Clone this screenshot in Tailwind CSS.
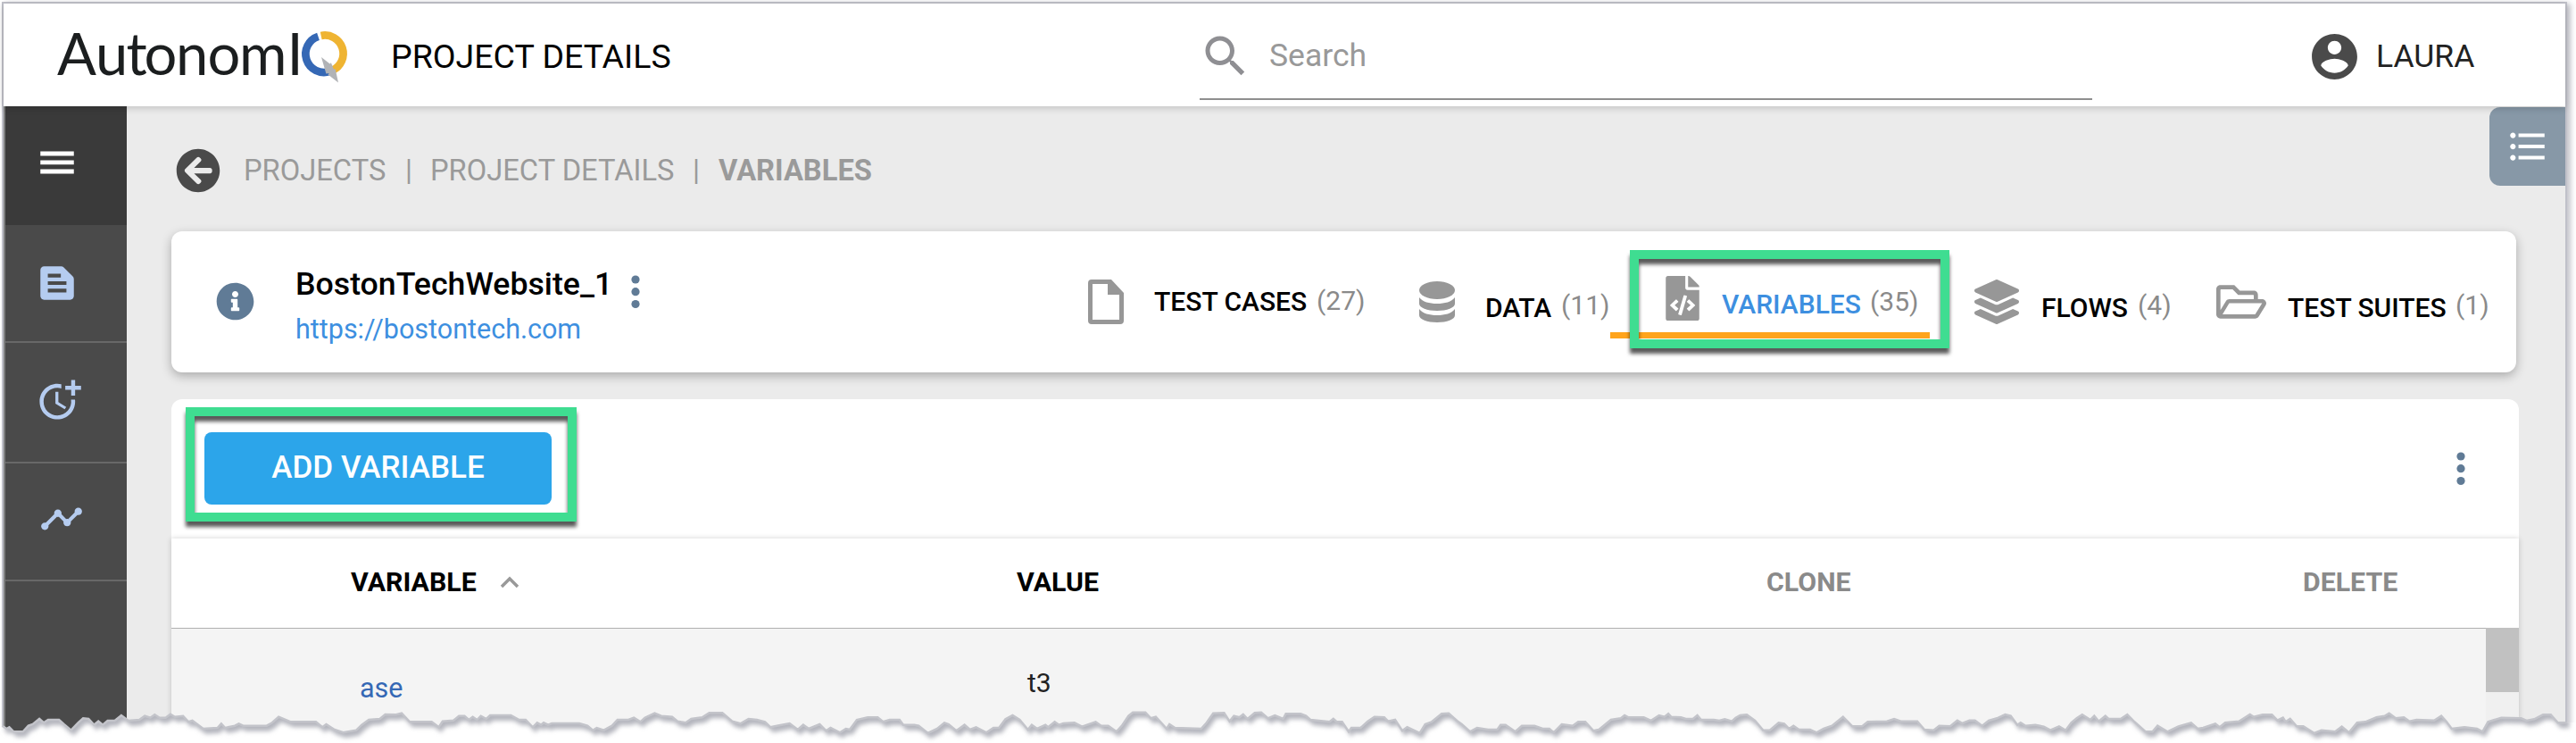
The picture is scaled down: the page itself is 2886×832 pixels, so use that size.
<!DOCTYPE html>
<html lang="en">
<head>
<meta charset="utf-8">
<title>AutonomIQ - Project Details</title>
<script src="https://cdn.jsdelivr.net/npm/@tailwindcss/browser@4"></script>
</head>
<body class="relative h-[832px] w-[2886px] overflow-hidden bg-white font-['Roboto',sans-serif] whitespace-nowrap">
<div class="mt-[2px] ml-[2px] flex h-[840px] w-[2874px] flex-col border-2 border-b-0 border-[#c0c1c9] bg-[#ebebeb] shadow-[4px_2px_6px_rgba(90,90,110,0.35)]">

  <!-- Top bar -->
  <header class="relative z-10 flex h-[115px] shrink-0 items-start bg-white shadow-[0_2px_8px_rgba(0,0,0,0.18)]">
    <svg class="ml-[54px] h-[115px] w-[340px] shrink-0" viewBox="58 4 340 115">
      <text x="64 107 141.500 161.500 197 232.500 268 321.500" y="84" font-family="Lato" font-size="65" fill="#1b1e1f">AutonomI</text>
      <path d="M356.500 40.800A20.600 20.600 0 1 0 369.500 79.900" fill="none" stroke="#3568b5" stroke-width="8.700"/>
      <path d="M359.700 39.900A20.600 20.600 0 0 1 372.500 78.800" fill="none" stroke="#efb432" stroke-width="8.700"/>
      <path d="M360 64l9.600 7.600 1.300-1.400 3 7.300 1.800-.3L379 92.500l-11.500-9 1.300-1.500-3.400.4z" fill="#b1b3b6"/>
    </svg>
    <h1 class="ml-[40px] mt-[38px] w-[906px] text-[37.500px] leading-[42px] text-black">PROJECT DETAILS</h1>
    <div class="flex h-[108px] w-[1000px] items-start border-b-2 border-[#8f8f8f]">
      <svg class="mt-[29px] -ml-px size-[60px] fill-[#8f8f93]" viewBox="0 0 24 24"><path d="M15.500 14h-.79l-.28-.27C15.410 12.590 16 11.110 16 9.500 16 5.910 13.090 3 9.500 3S3 5.910 3 9.500 5.910 16 9.500 16c1.610 0 3.090-.59 4.230-1.570l.27.28v.79l5 4.990L20.490 19l-4.990-5zm-6 0C7.010 14 5 11.990 5 9.500S7.010 5 9.500 5 14 7.010 14 9.500 11.990 14 9.500 14z"/></svg>
      <span class="ml-[19px] mt-[37px] text-[35.500px] leading-[42px] text-[#999]">Search</span>
    </div>
    <svg class="mt-[29px] ml-[241px] size-[61px] fill-[#4a4a4a]" viewBox="0 0 24 24"><path d="M12 2C6.480 2 2 6.480 2 12s4.480 10 10 10 10-4.480 10-10S17.520 2 12 2zm0 3c1.660 0 3 1.340 3 3s-1.340 3-3 3-3-1.340-3-3 1.340-3 3-3zm0 14.200c-2.500 0-4.710-1.280-6-3.220.03-1.990 4-3.080 6-3.080 1.990 0 5.970 1.090 6 3.080-1.290 1.940-3.500 3.220-6 3.220z"/></svg>
    <span class="ml-[16px] mt-[38px] text-[35.500px] leading-[42px] text-[#222]">LAURA</span>
  </header>

  <div class="flex min-h-0 grow">
    <!-- Side navigation -->
    <nav class="flex w-[138px] shrink-0 flex-col border-l-2 border-[#7d7e7e] bg-[#4a4a4a] fill-[#b5ccf0]">
      <div class="h-[133px] bg-[#3a3a3a] pt-[38px] pl-[33px]">
        <svg class="size-[50px] fill-white" viewBox="0 0 24 24"><path d="M3 18h18v-2.400H3V18zm0-4.900h18v-2.300H3v2.300zM3 6v2.400h18V6H3z"/></svg>
      </div>
      <div class="h-[132px] border-b-2 border-[#686868] pt-[40px] pl-[33px]">
        <svg class="size-[50px]" viewBox="0 0 24 24"><path d="M20.410 8.410l-4.830-4.830C15.210 3.210 14.700 3 14.170 3H5C3.900 3 3 3.900 3 5v14c0 1.100.9 2 2 2h14c1.100 0 2-.9 2-2V9.830C21 9.300 20.790 8.790 20.410 8.410zM7 7h7v2H7V7zM17 17H7v-2h10V17zM17 13H7v-2h10V13z"/></svg>
      </div>
      <div class="h-[135px] border-b-2 border-[#686868] pt-[37px] pl-[34px]">
        <svg class="size-[53px]" viewBox="0 0 24 24"><path d="M10 8v6l4.700 2.900.8-1.200-4-2.400V8zM17.920 12A6.957 6.957 0 0 1 11 20c-3.900 0-7-3.100-7-7s3.100-7 7-7c.7 0 1.370.1 2 .29V4.230c-.64-.15-1.310-.23-2-.23-5 0-9 4-9 9s4 9 9 9 9-4 9-9c0-.34-.02-.67-.06-1h-2.020zM20 5V2h-2v3h-3v2h3v3h2V7h3V5z"/></svg>
      </div>
      <div class="h-[132px] border-b-2 border-[#686868] pt-[37px] pl-[38px]">
        <svg class="size-[50px]" viewBox="0 0 24 24"><path d="M23 8c0 1.100-.9 2-2 2-.18 0-.35-.02-.51-.07l-3.560 3.550c.05.16.07.34.07.52 0 1.100-.9 2-2 2s-2-.9-2-2c0-.18.02-.36.07-.52l-2.550-2.550c-.16.05-.34.07-.52.07s-.36-.02-.52-.07l-4.550 4.560c.05.16.07.33.07.51 0 1.100-.9 2-2 2s-2-.9-2-2 .9-2 2-2c.18 0 .35.02.51.07l4.560-4.550C8.020 9.360 8 9.180 8 9c0-1.100.9-2 2-2s2 .9 2 2c0 .18-.02.36-.07.52l2.550 2.550c.16-.05.34-.07.52-.07s.36.02.52.07l3.550-3.560C19.020 8.350 19 8.180 19 8c0-1.100.9-2 2-2s2 .9 2 2z"/></svg>
      </div>
    </nav>

    <main class="flex w-[2732px] flex-col pl-[50px]">
      <!-- Breadcrumb and list toggle -->
      <div class="flex h-[140px] items-start">
        <svg class="mt-[47px] ml-[5px] size-[50px] fill-[#4a4a4a]" viewBox="0 0 512 512"><path d="M256 504C119 504 8 393 8 256S119 8 256 8s248 111 248 248-111 248-248 248zm28.900-143.600L209.400 288H392c13.300 0 24-10.700 24-24v-16c0-13.300-10.700-24-24-24H209.400l75.500-72.400c9.700-9.300 9.900-24.800.4-34.300l-11-10.900c-9.400-9.400-24.600-9.400-33.900 0L107.700 239c-9.400 9.400-9.400 24.600 0 33.900l132.700 132.700c9.400 9.400 24.600 9.400 33.900 0l11-10.900c9.500-9.500 9.300-25-.4-34.300z"/></svg>
        <div class="mt-[52px] ml-[26px] flex text-[32.700px] leading-[40px] text-[#9a9a9a]">
          <span class="w-[181px]">PROJECTS</span><span class="w-[28px]">|</span>
          <span class="w-[294px]">PROJECT DETAILS</span><span class="w-[29px]">|</span>
          <span class="font-bold">VARIABLES</span>
        </div>
        <div class="mt-px ml-auto h-[88px] w-[85px] rounded-l-[12px] bg-[#8798a7] pt-[19px] pl-[18px]">
          <svg class="size-[50px] fill-white" viewBox="0 0 24 24"><path d="M4 10.500c-.83 0-1.500.67-1.500 1.500s.67 1.500 1.500 1.500 1.500-.67 1.500-1.500-.67-1.500-1.500-1.500zm0-6c-.83 0-1.500.67-1.500 1.500S3.170 7.500 4 7.500 5.500 6.830 5.500 6 4.830 4.500 4 4.500zm0 12c-.83 0-1.500.68-1.500 1.500s.68 1.500 1.500 1.500 1.500-.68 1.500-1.500-.67-1.500-1.500-1.500zM7 19h14v-2H7v2zm0-6h14v-2H7v2zm0-8v2h14V5H7z"/></svg>
        </div>
      </div>

      <!-- Project card -->
      <section class="flex h-[158px] w-[2627px] shrink-0 items-start rounded-[12px] bg-white shadow-[0_4px_12px_rgba(0,0,0,0.28)]">
        <svg class="mt-[57px] ml-[50px] size-[43px] fill-[#607b96]" viewBox="0 0 512 512"><path d="M256 8C119.043 8 8 119.083 8 256c0 136.997 111.043 248 248 248s248-111.003 248-248C504 119.083 392.957 8 256 8zm0 110c23.196 0 42 18.804 42 42s-18.804 42-42 42-42-18.804-42-42 18.804-42 42-42zm56 254c0 6.627-5.373 12-12 12h-88c-6.627 0-12-5.373-12-12v-24c0-6.627 5.373-12 12-12h12v-64h-12c-6.627 0-12-5.373-12-12v-24c0-6.627 5.373-12 12-12h64c6.627 0 12 5.373 12 12v100h12c6.627 0 12 5.373 12 12v24z"/></svg>
        <div class="mt-[38px] ml-[46px] w-[370px]">
          <div class="text-[35.700px] leading-[42px] font-medium text-black">BostonTechWebsite_1</div>
          <div class="mt-[10px] text-[30.500px] leading-[40px] text-[#3d8fe0]">https://bostontech.com</div>
        </div>
        <svg class="mt-[48px] ml-[6px] h-[40px] w-[10px] fill-[#607b96]" viewBox="0 0 10 40"><circle cx="5" cy="6" r="4.600"/><circle cx="5" cy="19.700" r="4.600"/><circle cx="5" cy="33.500" r="4.600"/></svg>

        <div class="ml-[502px] flex items-start fill-[#979797] text-[30px] leading-[36px]">
          <div class="flex w-[371px] items-start">
            <svg class="mt-[54px] h-[50px] w-[40px]" viewBox="0 0 40 50"><path fill-rule="evenodd" d="M4 0h22L40 15v31a4 4 0 0 1-4 4H4a4 4 0 0 1-4-4V4a4 4 0 0 1 4-4zM5 5v40h30V17H22V5z"/></svg>
            <span class="mt-[61px] ml-[34px] w-[182px] font-medium text-black">TEST CASES</span><span class="mt-[60px] text-[#8a8a8a]">(27)</span>
          </div>
          <div class="relative flex w-[276px] items-start">
            <svg class="mt-[56px] h-[46px] w-[40px]" viewBox="0 0 40 46"><ellipse cx="20" cy="10" rx="20" ry="10"/><path d="M0 18C4 23 11 25 20 25s16-2 20-7v7c0 4.500-9 8-20 8S0 29.500 0 25zM0 31c4 5 11 7 20 7s16-2 20-7v7c0 4.500-9 8-20 8S0 42.500 0 38z"/></svg>
            <span class="mt-[68px] ml-[34px] w-[85px] font-medium text-black">DATA</span><span class="mt-[65px] text-[#8a8a8a]">(11)</span>
          </div>
          <div class="relative flex w-[346px] items-start">
            <div class="absolute top-[113px] left-[-62px] h-[7px] w-[358px] bg-[#ffa41c]"></div>
            <svg class="mt-[50px] h-[50px] w-[38px]" viewBox="0 0 384 512"><path d="M384 121.941V128H256V0h6.059c6.365 0 12.470 2.529 16.971 7.029l97.941 97.941A24.005 24.005 0 0 1 384 121.941zM248 160c-13.200 0-24-10.800-24-24V0H24C10.745 0 0 10.745 0 24v464c0 13.255 10.745 24 24 24h336c13.255 0 24-10.745 24-24V160H248zM123.206 400.505a5.400 5.400 0 0 1-7.633.246l-64.866-60.812a5.400 5.400 0 0 1 0-7.879l64.866-60.812a5.400 5.400 0 0 1 7.633.246l19.579 20.885a5.400 5.400 0 0 1-.372 7.747L101.650 336l40.763 35.874a5.400 5.400 0 0 1 .372 7.747l-19.579 20.884zm51.295 50.479l-27.453-7.970a5.402 5.402 0 0 1-3.681-6.692l61.440-211.626a5.402 5.402 0 0 1 6.692-3.681l27.452 7.970a5.400 5.400 0 0 1 3.680 6.692l-61.440 211.626a5.397 5.397 0 0 1-6.690 3.681zm160.792-111.045l-64.866 60.812a5.400 5.400 0 0 1-7.633-.246l-19.580-20.885a5.400 5.400 0 0 1 .372-7.747L284.350 336l-40.763-35.874a5.400 5.400 0 0 1-.372-7.747l19.580-20.885a5.400 5.400 0 0 1 7.633-.246l64.866 60.812a5.400 5.400 0 0 1-.001 7.879z"/></svg>
            <span class="mt-[64px] ml-[25px] w-[166px] font-medium text-[#3d8fe0]">VARIABLES</span><span class="mt-[61px] text-[#8a8a8a]">(35)</span>
            <div class="absolute top-[21px] left-[-40px] h-[110px] w-[358px] border-[10px] border-[#3fdd91] drop-shadow-[0_6px_2px_rgba(0,0,0,0.65)]"></div>
          </div>
          <div class="flex w-[271px] items-start">
            <svg class="mt-[54px] size-[50px]" viewBox="0 0 512 512"><path d="M12.410 148.020l232.940 105.670c6.800 3.090 14.490 3.090 21.290 0l232.940-105.670c16.550-7.510 16.550-32.520 0-40.030L266.650 2.310a25.607 25.607 0 0 0-21.290 0L12.410 107.980c-16.550 7.510-16.550 32.530 0 40.040zm487.180 88.280l-58.090-26.330-161.640 73.270c-7.560 3.430-15.590 5.170-23.860 5.170s-16.290-1.740-23.860-5.170L70.510 209.970l-58.100 26.330c-16.550 7.500-16.550 32.500 0 40l232.940 105.590c6.800 3.080 14.490 3.080 21.290 0L499.590 276.300c16.550-7.500 16.550-32.500 0-40zm0 127.800l-57.870-26.230-161.860 73.370c-7.560 3.430-15.590 5.170-23.860 5.170s-16.290-1.740-23.860-5.170L70.290 337.870 12.410 364.100c-16.550 7.500-16.550 32.500 0 40l232.940 105.590c6.800 3.080 14.490 3.080 21.290 0L499.590 404.100c16.550-7.500 16.550-32.500 0-40z"/></svg>
            <span class="mt-[68px] ml-[25px] w-[108px] font-medium text-black">FLOWS</span><span class="mt-[65px] text-[#8a8a8a]">(4)</span>
          </div>
          <div class="flex items-start">
            <svg class="mt-[60px] h-[38px] w-[56px]" viewBox="0 64 576 384"><path d="M527.900 224H480v-48c0-26.500-21.500-48-48-48H272l-64-64H48C21.500 64 0 85.500 0 112v288c0 26.500 21.500 48 48 48h400c16.500 0 31.900-8.500 40.700-22.600l79.900-128c20-31.900-3-73.400-40.700-73.400zM48 118c0-3.300 2.700-6 6-6h134.100l64 64H426c3.300 0 6 2.700 6 6v42H152c-16.800 0-32.400 8.800-41.100 23.200L48 351.400zm400 282H72l77.200-128H528z"/></svg>
            <span class="mt-[68px] ml-[24px] w-[188px] font-medium text-black">TEST SUITES</span><span class="mt-[65px] text-[#8a8a8a]">(1)</span>
          </div>
        </div>
      </section>

      <!-- Variables table -->
      <section class="mt-[30px] flex w-[2630px] grow flex-col rounded-t-[12px] bg-white">
        <div class="flex h-[156px] shrink-0 items-start">
          <div class="relative mt-[37px] ml-[37px]">
            <button class="block h-[81px] w-[389px] rounded-[8px] bg-[#2ca5ea] pb-[2px] text-[35px] leading-[78px] font-medium text-white">ADD VARIABLE</button>
            <div class="absolute top-[-28px] left-[-21px] h-[128px] w-[438px] border-[10px] border-[#3fdd91] drop-shadow-[0_6px_2px_rgba(0,0,0,0.65)]"></div>
          </div>
          <svg class="mt-[58px] ml-auto mr-[60px] h-[40px] w-[10px] fill-[#607b96]" viewBox="0 0 10 40"><circle cx="5" cy="6" r="4.600"/><circle cx="5" cy="19.700" r="4.600"/><circle cx="5" cy="33.500" r="4.600"/></svg>
        </div>
        <div class="flex grow flex-col bg-white shadow-[0_0_6px_rgba(0,0,0,0.18)]">
          <div class="flex h-[101px] shrink-0 items-start border-b border-[#b0b0b0] pt-[31px] text-[30.300px] leading-[36px] font-bold text-[#8a8a8a]">
            <div class="ml-[201px] flex w-[746px] text-black"><span class="w-[167px]">VARIABLE</span>
              <svg class="mt-[11px] h-[14px] w-[22px]" viewBox="0 0 22 14"><path d="M2 12l9-9 9 9" fill="none" stroke="#999" stroke-width="3.500"/></svg>
            </div>
            <span class="w-[840px] text-black">VALUE</span>
            <span class="w-[601px]">CLONE</span>
            <span>DELETE</span>
          </div>
          <div class="flex grow items-start bg-[#f4f4f4] text-[30px] leading-[36px]">
            <span class="mt-[49px] ml-[211px] w-[748px] text-[30.500px] text-[#3568b5]">ase</span>
            <span class="mt-[43px] text-[#222]">t3</span>
            <div class="ml-auto -mt-px h-full w-[37px] bg-[#f0f0f0]"><div class="h-[72px] bg-[#c1c1c1]"></div></div>
          </div>
        </div>
      </section>
    </main>
  </div>
</div>

<!-- Torn lower edge -->
<svg class="absolute top-[780px] left-0 h-[52px] w-[2886px]" viewBox="0 780 2886 52">
  <defs>
    <clipPath id="below"><path id="belowPath"/></clipPath>
    <filter id="soft" x="-5%" y="-50%" width="110%" height="200%"><feGaussianBlur stdDeviation="2.500"/></filter>
  </defs>
  <path id="paper" fill="#fff"/>
  <g clip-path="url(#below)"><path id="shade" fill="#b4b5bd" filter="url(#soft)" transform="translate(3 6)"/></g>
  <path id="rim" fill="none" stroke="#c3c4ca" stroke-width="2.500"/>
</svg>
<script>
const segments = [
 [0, .6122, "4,755 12,765 17,760 25,775 42,775 52,755 60,750 72,732 80,745 88,735 108,735 117,750 130,770 143,745 152,730 162,732 172,752 180,740 188,752 197,738 210,738 222,720 235,738 255,735 265,722 275,728 283,718 292,728 303,728 312,716 320,725 335,722 345,742 352,738 372,765 398,762 405,748 412,762 430,755 437,748 445,755 488,755 498,745 510,725 532,742 578,742 590,760 597,750 612,768 628,778 652,770 662,752 675,735 695,732 705,717 725,718 735,713 750,742 790,742 803,760 810,740 830,737 840,722 850,722 858,735 865,725 873,735 880,722 890,732 897,720 935,720 950,735 962,735 975,760 983,745 990,752 995,745 1003,752 1010,747 1060,747 1075,755 1085,770 1092,762 1105,770 1120,755 1130,735 1150,735 1160,728 1172,742 1180,728 1198,713 1210,722 1230,725 1240,740 1255,745 1265,732 1285,727 1298,712 1322,712 1340,740 1355,748 1370,732 1385,735 1400,742 1410,760 1422,755 1445,747 1460,768 1470,752 1480,765 1500,750 1512,772 1520,762 1537,778 1548,765 1555,768"],
 [960, .6122, "0,735 20,727 38,727 48,742 60,735 78,735 85,752 105,752 113,755 130,780 147,765 160,745 168,750 182,772 197,752 207,768 218,760 237,778 250,762 260,762 272,733 285,720 298,735 313,768 320,752 330,765 345,752 350,760 362,742 370,752 378,747 398,745 412,758 437,742 447,755 460,755 475,775 485,755 497,722 505,710 528,710 538,730 547,725 567,765 572,750 582,762 630,765 640,745 652,713 672,712 682,740 690,722 700,727 707,717 715,732 728,712 740,710 752,730 765,720 780,732 785,715 812,715 822,722 830,735 865,742 872,732 878,742 888,742 900,775 905,762 922,762 935,740 947,725 965,727 972,740 985,735 998,772 1007,760 1030,780 1040,750 1052,742 1062,727 1070,715 1083,713 1098,738 1107,750 1122,775 1135,762 1155,768 1172,768 1178,752 1187,752 1205,775 1217,755 1240,755 1255,765 1267,765 1275,778 1290,750 1310,755 1320,742 1333,742 1348,772 1358,768 1380,735 1398,730 1405,720 1412,727 1440,727 1453,738 1468,720 1478,725 1485,715 1490,725 1508,727 1517,732 1530,732 1538,720 1545,735"],
 [1920, .6161, "0,735 10,738 20,733 33,740 40,728 48,720 60,718 75,738 90,770 102,770 118,745 128,748 137,765 145,755 155,768 175,768 187,778 200,765 215,755 235,725 252,757 270,757 280,742 315,740 328,732 340,740 370,740 383,768 400,770 410,755 430,757 443,737 452,747 465,737 475,737 488,755 500,738 515,730 530,717 540,722 552,752 558,745 567,755 585,752 600,758 612,770 628,757 640,770 650,745 660,730 670,718 685,735 692,722 700,740 712,722 718,732 740,732 752,717 765,742 785,775 798,775 807,755 825,775 845,757 868,745 880,765 890,762 912,748 920,760 930,745 955,740 975,717 982,725 998,718 1015,718 1025,737 1035,728 1040,742 1048,732 1060,757 1072,757 1092,780 1105,770 1130,775 1142,758 1155,778 1170,745 1185,742 1205,727 1220,722 1228,713 1240,730 1255,727 1265,740 1278,735 1310,737 1323,722 1332,740 1342,765 1365,760 1388,765 1398,775 1408,742 1432,728 1468,730 1478,738 1492,733 1508,718 1522,718 1535,745 1551,745"]
];
const edge = segments.flatMap(([x0, k, pts]) => pts.split(" ").map(p => {
  const [x, y] = p.split(",").map(Number);
  return (x0 + x * k).toFixed(1) + " " + (561 + y / 3).toFixed(1);
})).join("L");
const first = edge.split(" ")[1].split("L")[0];
const below = "M0 " + first + "L" + edge + "L2886 809V840H0Z";
document.getElementById("belowPath").setAttribute("d", below);
document.getElementById("paper").setAttribute("d", below);
document.getElementById("shade").setAttribute("d", "M2 700L" + edge + "L2875 700Z");
document.getElementById("rim").setAttribute("d", "M" + edge);
</script>
</body>
</html>
